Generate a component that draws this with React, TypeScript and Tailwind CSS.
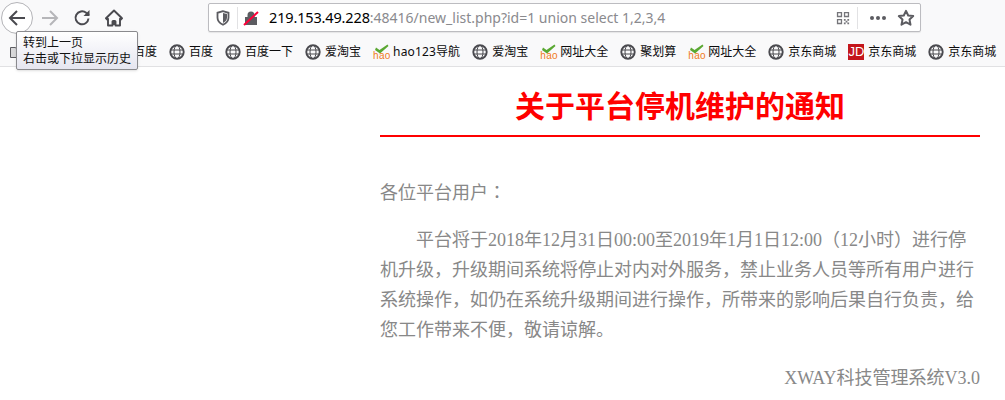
const SANS = "font-['Noto_Sans','Noto_Sans_CJK_SC',sans-serif]";

type Mark = "globe" | "hao" | "jd";

const bookmarks: { icon: Mark; label: string }[] = [
  { icon: "globe", label: "百度" },
  { icon: "globe", label: "百度" },
  { icon: "globe", label: "百度一下" },
  { icon: "globe", label: "爱淘宝" },
  { icon: "hao", label: "hao123导航" },
  { icon: "globe", label: "爱淘宝" },
  { icon: "hao", label: "网址大全" },
  { icon: "globe", label: "聚划算" },
  { icon: "hao", label: "网址大全" },
  { icon: "globe", label: "京东商城" },
  { icon: "jd", label: "京东商城" },
  { icon: "globe", label: "京东商城" },
];

function Globe() {
  return (
    <svg width="16" height="16" viewBox="0 0 16 16" fill="none" stroke="#4a4a4f" className="shrink-0">
      <circle cx="8" cy="8" r="6.7" strokeWidth="1.9" />
      <ellipse cx="8" cy="8" rx="3" ry="6.7" strokeWidth="1" />
      <path d="M1.500 6h13M1.500 10h13" strokeWidth="1" />
    </svg>
  );
}

function Hao() {
  return (
    <span className="relative block w-4 h-4 shrink-0">
      <svg width="16" height="11" viewBox="0 0 16 11" className="absolute left-0 top-0">
        <path d="M3 3.500 L6.500 6 L14.500 0.500 L15.500 2 L7 9.500 L2 6 Z" fill="#5aa832" />
      </svg>
      <span className="absolute left-0 top-[7px] text-[10px] leading-[10px] tracking-[0.3px] text-[#f07a22] font-['Liberation_Sans',sans-serif]">
        hao
      </span>
    </span>
  );
}

function Jd() {
  return (
    <span className="w-4 h-4 shrink-0 bg-[#c4161c] text-white text-[13px] leading-4 text-center font-['Liberation_Sans',sans-serif]">
      JD
    </span>
  );
}

function BookmarkIcon({ icon }: { icon: Mark }) {
  if (icon === "hao") return <Hao />;
  if (icon === "jd") return <Jd />;
  return <Globe />;
}

function NavButtons() {
  return (
    <div className="flex items-center">
      <button className="w-[32px] h-[32px] ml-[1px] rounded-full bg-white border border-[#b4b4b8] flex items-center justify-center">
        <svg width="18" height="18" viewBox="0 0 18 18" fill="none" stroke="#4a4a4f" strokeWidth="2">
          <path d="M17 9H2M9 2 2 9l7 7" />
        </svg>
      </button>
      <svg width="18" height="18" viewBox="0 0 18 18" fill="none" stroke="#b6b6b9" strokeWidth="2" className="ml-[8px]">
        <path d="M1 9h15M9 2l7 7-7 7" />
      </svg>
      <svg width="18" height="18" viewBox="0 0 18 18" fill="none" stroke="#4a4a4f" strokeWidth="2" className="ml-[14px]">
        <path d="M15.500 9.500A6.500 6.500 0 1 1 13.200 3.800L16 6" />
        <path d="M16.500 1v6h-6" fill="#4a4a4f" stroke="none" />
      </svg>
      <svg width="18" height="18" viewBox="0 0 18 18" className="ml-[14px]">
        <path d="M9 1.500 1 9.300l1.200 1.200L3 9.800V16.500h4.500v-4h3v4H15V9.800l.8.700L17 9.300Z" fill="none" stroke="#4a4a4f" strokeWidth="1.900" strokeLinejoin="round" />
        <rect x="7.500" y="11" width="3" height="5" fill="#4a4a4f" />
      </svg>
    </div>
  );
}

function UrlBar() {
  return (
    <div className="ml-[85px] w-[713px] h-[29px] bg-white border border-[#bcbcc0] rounded-[2px] flex items-center shadow-[0_1px_1px_rgba(0,0,0,0.08)]">
      <svg width="14" height="16" viewBox="0 0 14 16" fill="none" className="ml-[7px]">
        <path d="M7 1.200 1.500 2.800v5c0 3.400 2.600 5.600 5.500 7 2.900-1.400 5.500-3.600 5.500-7v-5Z" stroke="#5c5c61" strokeWidth="1.800" />
        <path d="M7 3v10c2-1 4-2.800 4-5.200V4Z" fill="#5c5c61" />
      </svg>
      <span className="ml-[7px] w-px h-[22px] bg-[#e2e2e4]" />
      <svg width="16" height="16" viewBox="0 0 16 16" className="ml-[5px]">
        <path d="M4.500 7V5a3.500 3.500 0 0 1 7 0v2H14v8H2V7Z" fill="#5c5c61" />
        <path d="M1 15 15 2" stroke="#ff0039" strokeWidth="2" />
      </svg>
      <div className="ml-[10px] text-[14px] whitespace-nowrap text-[#8a8a8e]">
        <span className="text-black text-[14.500px] tracking-[-0.15px]">219.153.49.228</span>:48416/new_list.php?id=1 union select 1,2,3,4
      </div>
      <svg width="14" height="14" viewBox="0 0 16 16" fill="#75757a" className="ml-auto">
        <path d="M1 1h6v6H1ZM2.500 2.500v3h3v-3ZM9 1h6v6H9Zm1.500 1.500v3h3v-3ZM1 9h6v6H1Zm1.500 1.500v3h3v-3ZM9 9h2v2H9Zm4 0h2v2h-2Zm-2 2h2v2h-2Zm-2 2h2v2H9Zm4 0h2v2h-2Z" />
      </svg>
      <span className="ml-[7px] w-px h-[22px] bg-[#e2e2e4]" />
      <div className="ml-[12px] flex gap-[2px]">
        <span className="w-[4px] h-[4px] rounded-full bg-[#5c5c61]" />
        <span className="w-[4px] h-[4px] rounded-full bg-[#5c5c61]" />
        <span className="w-[4px] h-[4px] rounded-full bg-[#5c5c61]" />
      </div>
      <svg width="18" height="18" viewBox="0 0 18 18" fill="none" stroke="#5c5c61" strokeWidth="2" strokeLinejoin="round" className="ml-[11px] mr-[5px]">
        <path d="M9 1.800 11.200 6.500l5 .6-3.700 3.500 1 5.100L9 13.200l-4.500 2.500 1-5.100L1.800 7.100l5-.6Z" />
      </svg>
    </div>
  );
}

function BookmarksBar() {
  return (
    <div className="h-[29px] flex items-center text-[12px] text-[#0c0c0d] whitespace-nowrap border-b border-[#e1e1e3]">
      <svg width="16" height="16" viewBox="0 0 16 16" fill="#d8d8da" stroke="#5c5c61" className="ml-[9px] mr-[88px] shrink-0">
        <path d="M1.500 3.500h5l1.500 2h6.500v8h-13Z" />
      </svg>
      {bookmarks.map((b, i) => (
        <div key={i} className="flex items-center gap-[4px] mr-[12px]">
          <BookmarkIcon icon={b.icon} />
          <span className={b.label.startsWith("hao") ? "tracking-[0.15px]" : ""}>{b.label}</span>
        </div>
      ))}
    </div>
  );
}

export default function App() {
  return (
    <div className={`relative w-[1005px] h-[400px] overflow-hidden bg-white ${SANS}`}>
      <div className="bg-[#f9f9fa]">
        <div className="h-[38px] flex items-center pb-[3px]">
          <NavButtons />
          <UrlBar />
        </div>
        <BookmarksBar />
      </div>

      {/* back button tooltip */}
      <div className="absolute left-[16px] top-[31px] w-[122px] h-[39px] px-[6px] pt-[3px] border border-[#8a8a8e] rounded-[2px] bg-gradient-to-b from-white to-[#e6e6f0] text-[12px] leading-[16px] text-[#111] shadow-sm">
        <div>转到上一页</div>
        <div>右击或下拉显示历史</div>
      </div>

      <main className="ml-[380px] w-[600px] font-['Liberation_Serif','Noto_Sans_CJK_JP',serif] text-[18px] leading-[30px] text-[#888] [text-spacing-trim:space-all]">
        <h1 className="h-[70px] pt-[16px] border-b-2 border-[#f00] text-center text-[30px] leading-[42px] font-bold text-[#f00] font-['Noto_Sans_CJK_SC',sans-serif]">
          关于平台停机维护的通知
        </h1>
        <p className="mt-[41px]">各位平台用户：</p>
        <p className="mt-[17px] indent-[36px]">
          平台将于2018年12月31日00:00至2019年1月1日12:00（12小时）进行停机升级，升级期间系统将停止对内对外服务，禁止业务人员等所有用户进行系统操作，如仍在系统升级期间进行操作，所带来的影响后果自行负责，给您工作带来不便，敬请谅解。
        </p>
        <p className="mt-[18px] text-right">XWAY科技管理系统V3.0</p>
      </main>
    </div>
  );
}
